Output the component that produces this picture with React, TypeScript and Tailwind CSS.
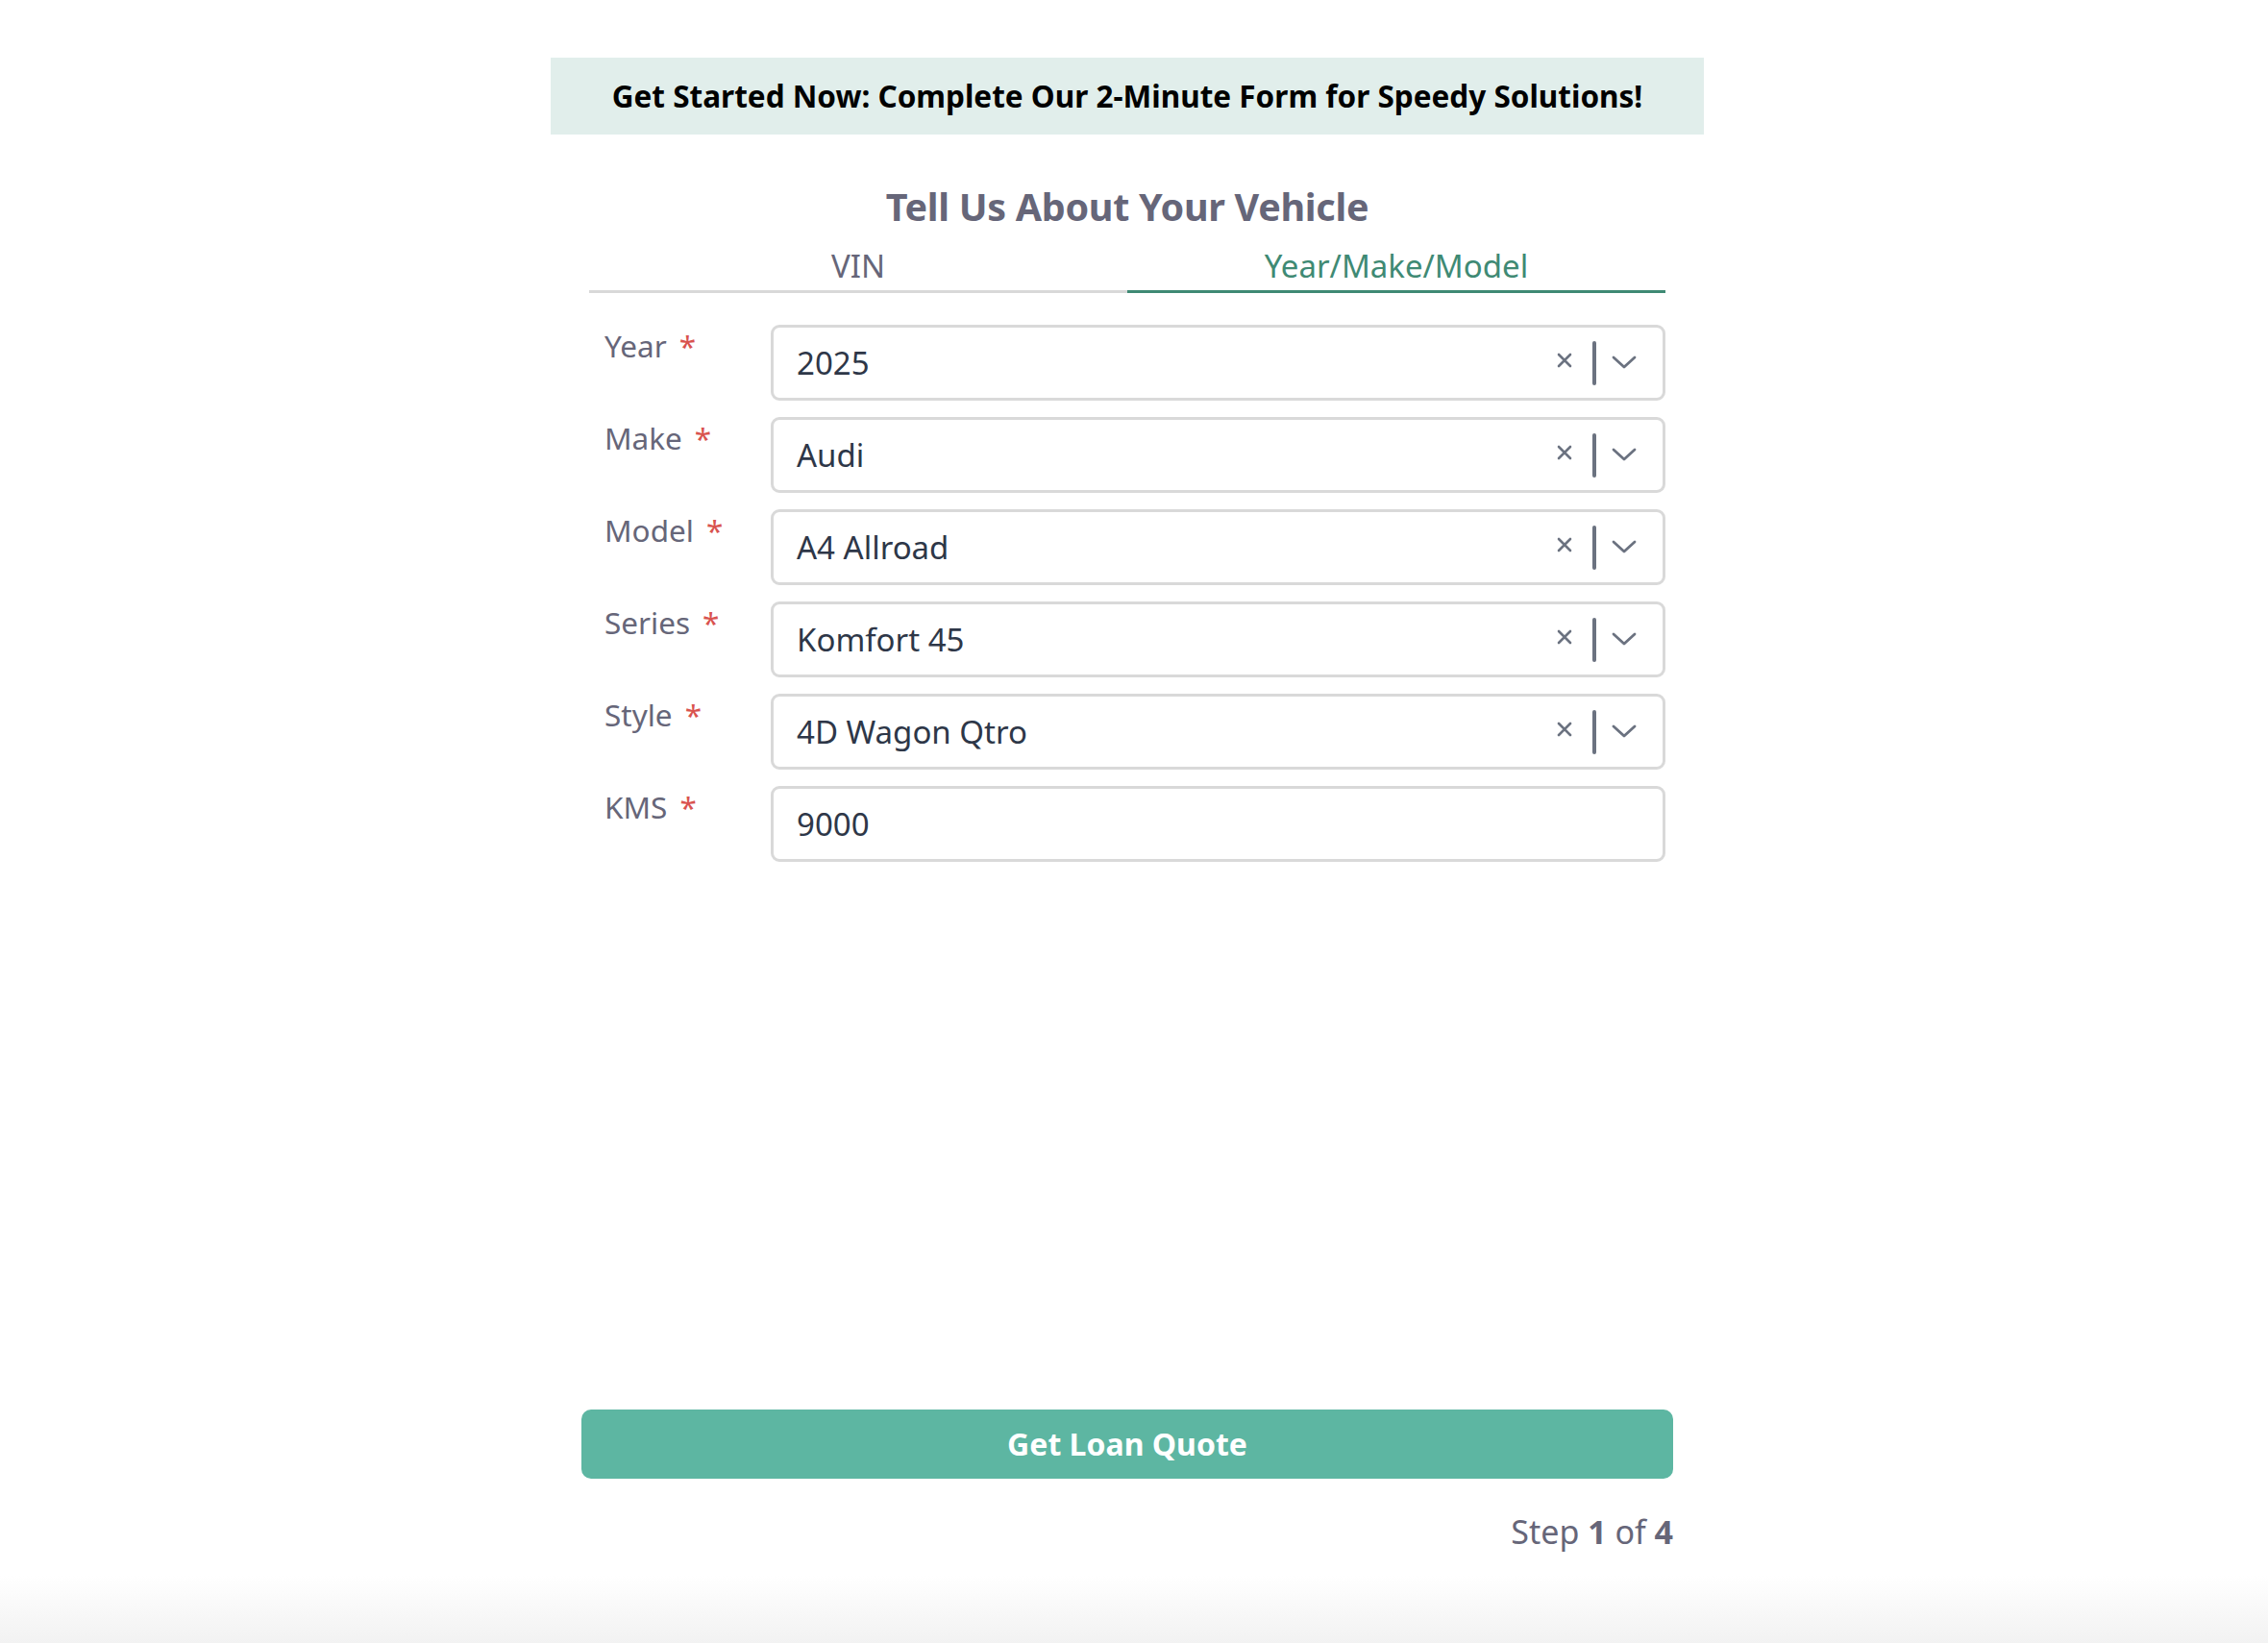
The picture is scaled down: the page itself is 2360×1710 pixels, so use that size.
import React from "react";

const fields = [
  { label: "Year", value: "2025", select: true },
  { label: "Make", value: "Audi", select: true },
  { label: "Model", value: "A4 Allroad", select: true },
  { label: "Series", value: "Komfort 45", select: true },
  { label: "Style", value: "4D Wagon Qtro", select: true },
  { label: "KMS", value: "9000", select: false },
];

function Controls() {
  return (
    <div className="flex items-center h-full">
      <svg width="16" height="16" viewBox="0 0 16 16" className="mr-[21px] -mt-[6px]">
        <path d="M2 2 L14 14 M14 2 L2 14" stroke="#6b7280" strokeWidth="2.6" strokeLinecap="round" />
      </svg>
      <div className="w-[4px] h-[46px] rounded-full bg-[#6b7280]" />
      <svg width="26" height="14" viewBox="0 0 26 14" className="ml-[16px] mr-[27px] -mt-[2px]">
        <path d="M2 2 L13 12 L24 2" stroke="#6b7280" strokeWidth="2.8" fill="none" strokeLinecap="round" strokeLinejoin="round" />
      </svg>
    </div>
  );
}

export default function App() {
  return (
    <div
      className="w-full h-[1710px] bg-[linear-gradient(to_bottom,#ffffff_1640px,#f2f2f2_1710px)] pt-[60px] pr-[14px]"
      style={{ fontFamily: "'Noto Sans', 'Open Sans', sans-serif" }}
    >
      <div className="w-[1200px] mx-auto">
        <div className="h-[80px] bg-[#e1eeeb] flex items-center justify-center">
          <span className="text-[31.5px] font-bold text-black">
            Get Started Now: Complete Our 2-Minute Form for Speedy Solutions!
          </span>
        </div>

        <div className="px-[40px]">
          <h1 className="mt-[51px] text-center text-[39.5px] leading-[48px] font-bold text-[#666679] tracking-[-0.3px]">
            Tell Us About Your Vehicle
          </h1>

          <div className="mt-[18px] flex">
            <div className="flex-1 text-center text-[33px] leading-[40px] text-[#666679] pb-[5px] border-b-[3px] border-[#d9d9d9]">
              VIN
            </div>
            <div className="flex-1 text-center text-[33px] leading-[40px] text-[#3f8a74] pb-[5px] border-b-[3px] border-[#3f8a74]">
              Year/Make/Model
            </div>
          </div>

          <div className="mt-[33px] flex flex-col gap-[17px] pl-[16px]">
            {fields.map((f) => (
              <div key={f.label} className="flex items-start">
                <div className="w-[173px] pt-[2px] text-[31.5px] leading-[40px] text-[#666679] flex">
                  <span>{f.label}</span>
                  <span className="ml-[13px] text-[#d9534f]">*</span>
                </div>
                <div className="flex-1 h-[79px] border-[3px] border-[#d9d9d9] rounded-[9px] flex items-center justify-between bg-white">
                  <span className="pl-[24px] text-[33px] text-[#2e3748]">{f.value}</span>
                  {f.select && <Controls />}
                </div>
              </div>
            ))}
          </div>
        </div>

        <div className="px-[32px] mt-[570px]">
          <button className="w-full h-[72px] rounded-[10px] bg-[#5db6a2] text-white text-[32px] font-bold">
            Get Loan Quote
          </button>
          <div className="mt-[35px] text-right text-[34px] leading-[40px] text-[#666679]">
            Step <span className="font-bold">1</span> of <span className="font-bold">4</span>
          </div>
        </div>
      </div>
    </div>
  );
}
